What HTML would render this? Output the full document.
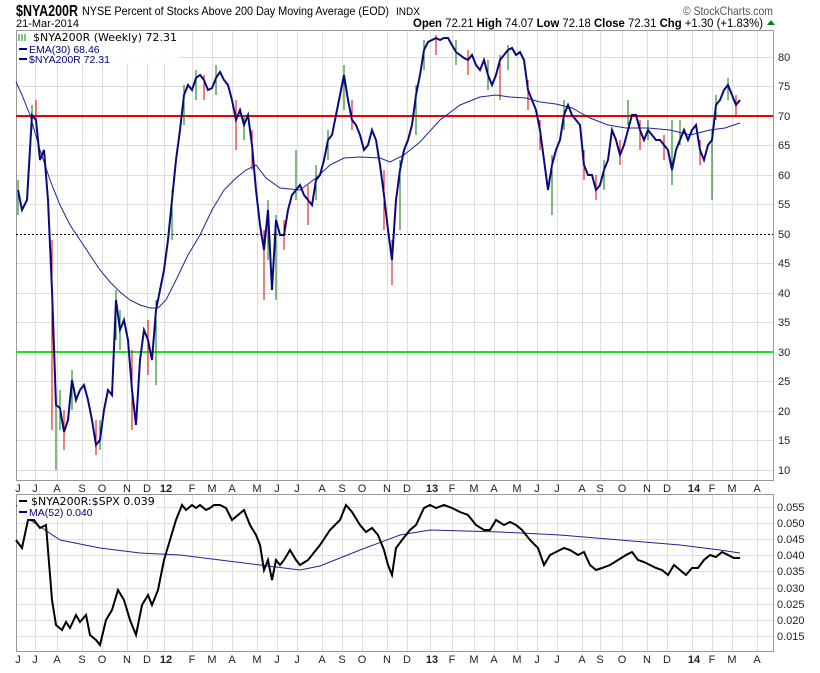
<!DOCTYPE html>
<html><head><meta charset="utf-8"><style>
body{margin:0;background:#fff;width:820px;height:668px;overflow:hidden;font-family:"Liberation Sans",sans-serif}
</style></head><body>
<svg width="820" height="668" xmlns="http://www.w3.org/2000/svg" font-family="Liberation Sans, sans-serif">
<text x="16" y="16" font-size="16" font-weight="bold" textLength="62" lengthAdjust="spacingAndGlyphs">$NYA200R</text>
<text x="82" y="15" font-size="12" textLength="307" lengthAdjust="spacingAndGlyphs">NYSE Percent of Stocks Above 200 Day Moving Average (EOD)</text>
<text x="396" y="15" font-size="11" textLength="24" lengthAdjust="spacingAndGlyphs">INDX</text>
<text x="683" y="15" font-size="12" fill="#555" textLength="90" lengthAdjust="spacingAndGlyphs">© StockCharts.com</text>
<text x="16" y="27" font-size="11">21-Mar-2014</text>
<text x="413" y="27" font-size="11.5" textLength="350" lengthAdjust="spacingAndGlyphs"><tspan font-weight="bold">Open</tspan> 72.21 <tspan font-weight="bold">High</tspan> 74.07 <tspan font-weight="bold">Low</tspan> 72.18 <tspan font-weight="bold">Close</tspan> 72.31 <tspan font-weight="bold">Chg</tspan> +1.30 (+1.83%)</text>
<path d="M767 25 L771 20 L775 25Z" fill="#080"/>
<g stroke="#ddd" stroke-width="1">
<path d="M16 57.5H773M16 86.5H773M16 116.5H773M16 145.5H773M16 175.5H773M16 204.5H773M16 263.5H773M16 293.5H773M16 322.5H773M16 381.5H773M16 411.5H773M16 440.5H773M16 470.5H773"/>
<path d="M16 507.5H773M16 523.5H773M16 539.5H773M16 555.5H773M16 571.5H773M16 588.5H773M16 604.5H773M16 620.5H773M16 636.5H773"/>
<path id="vg" d="M35.5 30V480M57.5 30V480M82.5 30V480M102.5 30V480M127.5 30V480M147.5 30V480M164.5 30V480M192.5 30V480M212.5 30V480M232.5 30V480M257.5 30V480M277.5 30V480M297.5 30V480M322.5 30V480M342.5 30V480M362.5 30V480M387.5 30V480M407.5 30V480M430.5 30V480M452.5 30V480M474.5 30V480M494.5 30V480M517.5 30V480M537.5 30V480M557.5 30V480M582.5 30V480M600.5 30V480M622.5 30V480M647.5 30V480M667.5 30V480M692.5 30V480M712.5 30V480M732.5 30V480M757.5 30V480"/>
<path d="M35.5 494V651M57.5 494V651M82.5 494V651M102.5 494V651M127.5 494V651M147.5 494V651M164.5 494V651M192.5 494V651M212.5 494V651M232.5 494V651M257.5 494V651M277.5 494V651M297.5 494V651M322.5 494V651M342.5 494V651M362.5 494V651M387.5 494V651M407.5 494V651M430.5 494V651M452.5 494V651M474.5 494V651M494.5 494V651M517.5 494V651M537.5 494V651M557.5 494V651M582.5 494V651M600.5 494V651M622.5 494V651M647.5 494V651M667.5 494V651M692.5 494V651M712.5 494V651M732.5 494V651M757.5 494V651"/>
</g>
<rect x="16.5" y="30.5" width="757" height="450" fill="none" stroke="#999"/>
<rect x="16.5" y="494.5" width="757" height="157" fill="none" stroke="#999"/>
<line x1="16" y1="234.5" x2="773" y2="234.5" stroke="#000" stroke-dasharray="2,2"/>
<line x1="16" y1="116" x2="773" y2="116" stroke="#e00" stroke-width="2"/>
<line x1="16" y1="352" x2="773" y2="352" stroke="#2d2" stroke-width="2"/>
<g stroke-width="1">
<path stroke="#070" d="M18 180V215M32 105V130M56 395V470M60 390V430M72 370V410M100 420V450M116 290V340M120 310V350M156 300V385M172 190V240M184 85V125M196 70V100M216 65V95M244 115V140M268 200V260M276 215V300M296 150V200M316 165V200M328 130V160M344 65V110M400 160V230M416 85V135M424 40V70M456 40V65M488 60V90M508 45V70M552 155V215M564 100V130M604 160V190M628 100V125M648 120V140M672 120V185M680 120V145M712 130V200M716 95V120M728 78V100"/>
<path stroke="#d00" d="M36 100V125M52 240V430M64 410V450M96 420V455M132 350V430M148 320V375M204 75V100M236 100V150M252 130V170M264 230V300M284 220V250M308 185V225M352 100V130M384 170V230M392 240V285M436 35V55M468 50V75M500 55V100M528 80V110M540 120V150M584 150V180M596 175V200M620 140V165M640 120V150M664 135V160M700 140V165M736 95V115"/>
</g>
<polyline fill="none" stroke="#22229a" stroke-width="1" points="16,82 22,95 30,115 40,150 50,180 60,205 70,225 80,240 90,255 100,270 110,282 120,292 130,300 140,305 150,308 158,308 166,300 176,280 188,255 200,235 212,210 224,190 236,178 246,170 256,165 266,178 280,188 300,190 316,178 330,165 344,158 360,157 380,158 390,162 404,155 420,142 440,120 460,105 480,97 496,95 510,97 526,98 540,102 556,104 572,108 590,118 608,125 626,128 648,128 670,130 690,135 710,130 725,128 740,123"/>
<polyline fill="none" stroke="#0a0a80" stroke-width="2" points="18,190 22,210 27,200 32,115 36,120 40,160 44,150 48,200 52,290 56,405 60,408 64,432 68,420 72,380 76,400 80,390 84,385 88,400 92,420 96,445 100,440 104,410 108,390 112,395 116,300 120,330 124,320 128,340 132,390 136,425 140,360 144,330 148,340 152,360 156,310 160,290 164,270 168,240 172,200 176,160 180,130 184,95 188,85 192,90 196,78 200,75 204,80 208,90 212,88 216,78 220,72 224,80 228,85 232,100 236,120 240,110 244,125 248,115 252,145 256,190 260,225 264,250 268,210 272,290 276,220 280,235 284,235 288,210 292,195 296,190 300,185 304,195 308,200 312,205 316,180 320,175 324,160 328,140 332,135 336,115 340,95 344,75 348,100 352,120 356,125 360,135 364,150 368,145 372,130 376,140 380,165 384,195 388,230 392,260 396,200 400,170 404,150 408,140 412,125 416,95 420,75 424,50 428,42 432,40 436,38 440,40 444,38 448,38 452,45 456,52 460,55 464,58 468,60 472,55 476,65 480,70 484,60 488,75 492,85 496,75 500,60 504,55 508,50 512,48 516,55 520,52 524,60 528,90 532,100 536,110 540,130 544,160 548,190 552,165 556,150 560,140 564,115 568,105 572,115 576,120 580,125 584,165 588,175 592,175 596,190 600,185 604,170 608,160 612,130 616,140 620,155 624,145 628,130 632,115 636,115 640,130 644,140 648,130 652,135 656,140 660,140 664,145 668,150 672,170 676,150 680,140 684,130 688,140 692,130 696,125 700,150 704,160 708,145 712,140 716,105 720,100 724,90 728,85 732,95 736,105 740,100"/>
<polyline fill="none" stroke="#22229a" stroke-width="1" points="16,505 30,520 60,540 100,548 140,553 180,555 220,560 260,565 300,570 320,566 360,550 400,535 430,530 500,532 560,535 620,540 680,545 720,550 740,553"/>
<polyline fill="none" stroke="#000" stroke-width="2" points="16,540 22,548 28,520 34,520 40,528 46,525 52,600 56,625 62,630 66,622 70,628 76,615 80,622 86,615 90,635 96,640 100,645 106,620 112,610 118,590 124,600 130,620 136,635 142,605 148,595 152,605 158,590 164,560 170,540 176,520 182,505 186,510 192,505 196,508 200,505 206,510 210,508 214,505 220,505 226,508 232,520 238,515 244,510 250,525 256,535 260,545 264,570 268,560 272,580 276,560 280,565 284,560 290,550 296,560 300,565 308,560 320,545 330,530 340,520 346,505 352,512 360,525 366,532 372,528 378,535 384,550 388,565 392,575 396,548 402,540 410,530 416,525 424,508 430,505 436,508 444,505 452,508 460,512 468,515 476,525 484,530 490,530 496,520 504,525 510,522 516,525 522,530 530,540 538,548 544,565 550,555 556,552 564,548 570,550 578,555 584,552 590,565 596,570 602,568 610,565 618,560 626,555 632,552 638,560 644,562 650,565 656,568 662,570 668,575 674,565 680,570 686,575 692,568 698,568 704,560 710,555 716,557 722,552 728,555 734,558 740,558"/>
<rect x="17" y="31" width="162" height="33" fill="#fff" opacity="0.85"/>
<text x="33" y="41" font-size="11" font-family="DejaVu Sans, sans-serif">$NYA200R (Weekly) 72.31</text>
<path d="M19 34V41M22 34V41M25 34V41" stroke="#080"/>
<line x1="19" y1="49" x2="27" y2="49" stroke="#000080" stroke-width="2"/><text x="29" y="53" font-size="10.5" fill="#000080">EMA(30) 68.46</text>
<line x1="19" y1="59" x2="27" y2="59" stroke="#000080" stroke-width="2"/><text x="29" y="63" font-size="10.5" fill="#000080">$NYA200R 72.31</text>
<rect x="17" y="495" width="140" height="24" fill="#fff" opacity="0.85"/>
<line x1="19" y1="501" x2="27" y2="501" stroke="#000" stroke-width="2"/><text x="31" y="505" font-size="11" font-family="DejaVu Sans, sans-serif">$NYA200R:$SPX 0.039</text>
<line x1="19" y1="512" x2="27" y2="512" stroke="#000080" stroke-width="2"/><text x="29" y="516" font-size="10.5" fill="#000080">MA(52) 0.040</text>
<g font-size="11" fill="#222">
<text x="778" y="61">80</text><text x="778" y="90">75</text><text x="778" y="120">70</text><text x="778" y="149">65</text><text x="778" y="179">60</text><text x="778" y="208">55</text><text x="778" y="238">50</text><text x="778" y="267">45</text><text x="778" y="297">40</text><text x="778" y="326">35</text><text x="778" y="356">30</text><text x="778" y="385">25</text><text x="778" y="415">20</text><text x="778" y="444">15</text><text x="778" y="474">10</text>
<text x="777" y="511">0.055</text><text x="777" y="527">0.050</text><text x="777" y="543">0.045</text><text x="777" y="559">0.040</text><text x="777" y="575">0.035</text><text x="777" y="592">0.030</text><text x="777" y="608">0.025</text><text x="777" y="624">0.020</text><text x="777" y="640">0.015</text>
</g>
<g id="ax" font-size="11" fill="#222" text-anchor="middle">
<text x="18" y="492">J</text><text x="35" y="492">J</text><text x="57" y="492">A</text><text x="82" y="492">S</text><text x="102" y="492">O</text><text x="127" y="492">N</text><text x="147" y="492">D</text><text x="166" y="492" font-weight="bold">12</text><text x="192" y="492">F</text><text x="212" y="492">M</text><text x="232" y="492">A</text><text x="257" y="492">M</text><text x="277" y="492">J</text><text x="297" y="492">J</text><text x="322" y="492">A</text><text x="342" y="492">S</text><text x="362" y="492">O</text><text x="387" y="492">N</text><text x="407" y="492">D</text><text x="432" y="492" font-weight="bold">13</text><text x="452" y="492">F</text><text x="474" y="492">M</text><text x="494" y="492">A</text><text x="517" y="492">M</text><text x="537" y="492">J</text><text x="557" y="492">J</text><text x="582" y="492">A</text><text x="600" y="492">S</text><text x="622" y="492">O</text><text x="647" y="492">N</text><text x="667" y="492">D</text><text x="694" y="492" font-weight="bold">14</text><text x="712" y="492">F</text><text x="732" y="492">M</text><text x="757" y="492">A</text>
</g>
<use href="#ax" transform="translate(0,171)"/>
</svg>
</body></html>
